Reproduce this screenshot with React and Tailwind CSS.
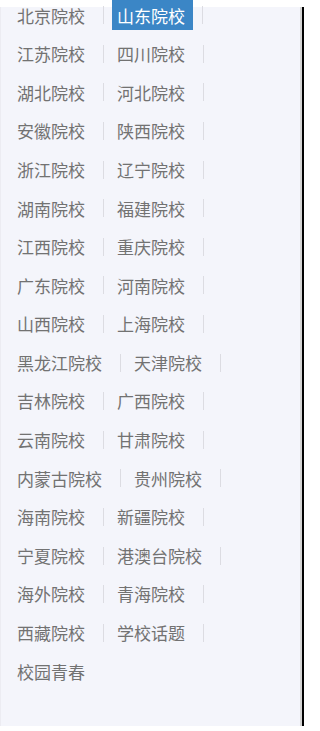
const rows = [
  ["北京院校", "山东院校"],
  ["江苏院校", "四川院校"],
  ["湖北院校", "河北院校"],
  ["安徽院校", "陕西院校"],
  ["浙江院校", "辽宁院校"],
  ["湖南院校", "福建院校"],
  ["江西院校", "重庆院校"],
  ["广东院校", "河南院校"],
  ["山西院校", "上海院校"],
  ["黑龙江院校", "天津院校"],
  ["吉林院校", "广西院校"],
  ["云南院校", "甘肃院校"],
  ["内蒙古院校", "贵州院校"],
  ["海南院校", "新疆院校"],
  ["宁夏院校", "港澳台院校"],
  ["海外院校", "青海院校"],
  ["西藏院校", "学校话题"],
  ["校园青春"],
];

const active = "山东院校";

const Item = ({ name, last }) => (
  <div className="flex items-center">
    <span
      className={
        name === active
          ? "flex h-[30px] items-center bg-[#3b86c6] pl-[5px] pr-[8px] text-white"
          : "px-[5px] text-[#727272]"
      }
    >
      {name}
    </span>
    {!last && (
      <span
        className={
          name === active
            ? "mr-[8px] ml-[9px] h-[18px] w-px bg-[#dcdce2]"
            : "mr-[8px] ml-[13px] h-[18px] w-px bg-[#dcdce2]"
        }
      ></span>
    )}
  </div>
);

const App = () => {
  return (
    <div className="h-[731px] w-[307px] overflow-hidden bg-white font-['Noto_Sans_CJK_SC','Noto_Sans',sans-serif]">
      <div className="mt-[7px] flex h-[719px]">
        <div className="w-[300px] border-l border-[#ececf2] bg-[#f4f5fb]">
          <div className="-mt-[11px] pl-[11px] text-[17px]">
            {rows.map((r, i) => (
              <div key={i} className="flex h-[38.6px] items-center">
                {r.map((name) => (
                  <Item key={name} name={name} last={r.length === 1} />
                ))}
              </div>
            ))}
          </div>
        </div>
        <div className="w-[2px] bg-[#d4d4d4]"></div>
        <div className="w-[2px] bg-black"></div>
      </div>
    </div>
  );
};

export default App;
